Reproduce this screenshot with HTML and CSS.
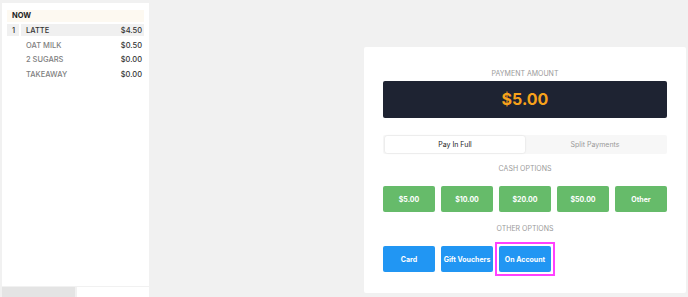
FILE: index.html
```html
<!DOCTYPE html>
<html lang="en">
<head>
    <meta charset="UTF-8">
    <title>Payment</title>
    <link rel="stylesheet" href="styles.css">
</head>
<body>
    <div class="screen">
        <div class="order">
            <div class="ticket">
                <div class="now">NOW</div>
                <div class="line">
                    <span class="qty">1</span>
                    <span class="item"><span>LATTE</span><span>$4.50</span></span>
                </div>
                <div class="mod"><span>OAT MILK</span><span>$0.50</span></div>
                <div class="mod"><span>2 SUGARS</span><span>$0.00</span></div>
                <div class="mod"><span>TAKEAWAY</span><span>$0.00</span></div>
            </div>
            <div class="tabs">
                <div class="tab"></div>
                <div class="tab active"></div>
            </div>
        </div>

        <div class="pay">
            <div class="label">PAYMENT AMOUNT</div>
            <div class="amount">$5.00</div>

            <div class="toggle">
                <div class="seg on">Pay In Full</div>
                <div class="seg">Split Payments</div>
            </div>

            <div class="label">CASH OPTIONS</div>
            <div class="btns">
                <button class="btn cash">$5.00</button>
                <button class="btn cash">$10.00</button>
                <button class="btn cash">$20.00</button>
                <button class="btn cash">$50.00</button>
                <button class="btn cash">Other</button>
            </div>

            <div class="label">OTHER OPTIONS</div>
            <div class="btns">
                <button class="btn other">Card</button>
                <button class="btn other">Gift Vouchers</button>
                <button class="btn other picked">On Account</button>
            </div>
        </div>
    </div>
</body>
</html>
```

FILE: styles.css
```css
* {
    box-sizing: border-box;
}

body {
    margin: 0;
    background-color: #f1f1f1;
    font-family: Inter, "Liberation Sans", sans-serif;
    width: 688px;
    height: 297px;
    overflow: hidden;
}

.screen {
    display: flex;
    align-items: flex-start;
}

/* left order column */
.order {
    width: 147px;
    margin: 3px 0 0 2px;
    display: flex;
    flex-direction: column;
}

.ticket {
    height: 283px;
    background-color: #ffffff;
    padding: 7px 5px;
}

.now {
    height: 12px;
    line-height: 12px;
    background-color: #fdf9f1;
    font-size: 7.5px;
    font-weight: 700;
    color: #222222;
    padding-left: 5px;
    margin-bottom: 2px;
}

.line {
    display: flex;
    gap: 2px;
    height: 12px;
    line-height: 13px;
    font-size: 7.5px;
    font-weight: 500;
    color: #333333;
    margin-bottom: 2.5px;
}

.qty {
    width: 12px;
    background-color: #f0f0f0;
    padding-left: 5px;
}

.item {
    flex: 1;
    display: flex;
    justify-content: space-between;
    background-color: #f0f0f0;
    padding: 0 2px 0 5px;
}

.mod {
    display: flex;
    justify-content: space-between;
    height: 12px;
    line-height: 13px;
    font-size: 7.5px;
    font-weight: 500;
    color: #808080;
    margin: 0 0 2.5px 19px;
    padding: 0 2px 0 0;
}

.mod span:last-child {
    color: #333333;
}

.tabs {
    display: flex;
    gap: 2px;
    margin-top: 1px;
    height: 12px;
}

.tab {
    flex: 1;
    background-color: #e4e4e4;
}

.tab.active {
    background-color: #ffffff;
}

/* right payment card */
.pay {
    width: 322px;
    height: 246px;
    margin: 47px 0 0 215px;
    background-color: #ffffff;
    border-radius: 2px;
    padding: 22px 19px 0;
}

.label {
    height: 10px;
    line-height: 10px;
    text-align: center;
    font-size: 7px;
    color: #9a9a9a;
}

.amount {
    height: 37px;
    line-height: 37px;
    margin: 2px 0 17px;
    background-color: #1e2332;
    border-radius: 2px;
    text-align: center;
    font-size: 16px;
    font-weight: 700;
    color: #f7a21b;
}

.toggle {
    display: flex;
    height: 19px;
    padding: 1px 2px;
    background-color: #f7f7f7;
    border-radius: 2px;
    margin-bottom: 10px;
}

.seg {
    flex: 1;
    line-height: 17px;
    text-align: center;
    font-size: 7px;
    color: #999999;
}

.seg.on {
    background-color: #ffffff;
    color: #222222;
    border-radius: 2px;
    box-shadow: 0 0 2px rgba(0, 0, 0, .15);
}

.btns {
    display: flex;
    gap: 6px;
    margin: 12px 0;
}

.btn {
    width: 52px;
    height: 26px;
    border: none;
    border-radius: 2px;
    padding: 0;
    font-family: inherit;
    font-size: 7px;
    font-weight: 700;
    color: #ffffff;
}

.cash {
    background-color: #66bb6a;
}

.other {
    background-color: #2196f3;
}

/* highlight frame around the chosen option */
.picked {
    position: relative;
}

.picked::after {
    content: "";
    position: absolute;
    top: -4px;
    left: -4px;
    right: -4px;
    bottom: -4px;
    border: 2px solid #ff40ff;
}
```
